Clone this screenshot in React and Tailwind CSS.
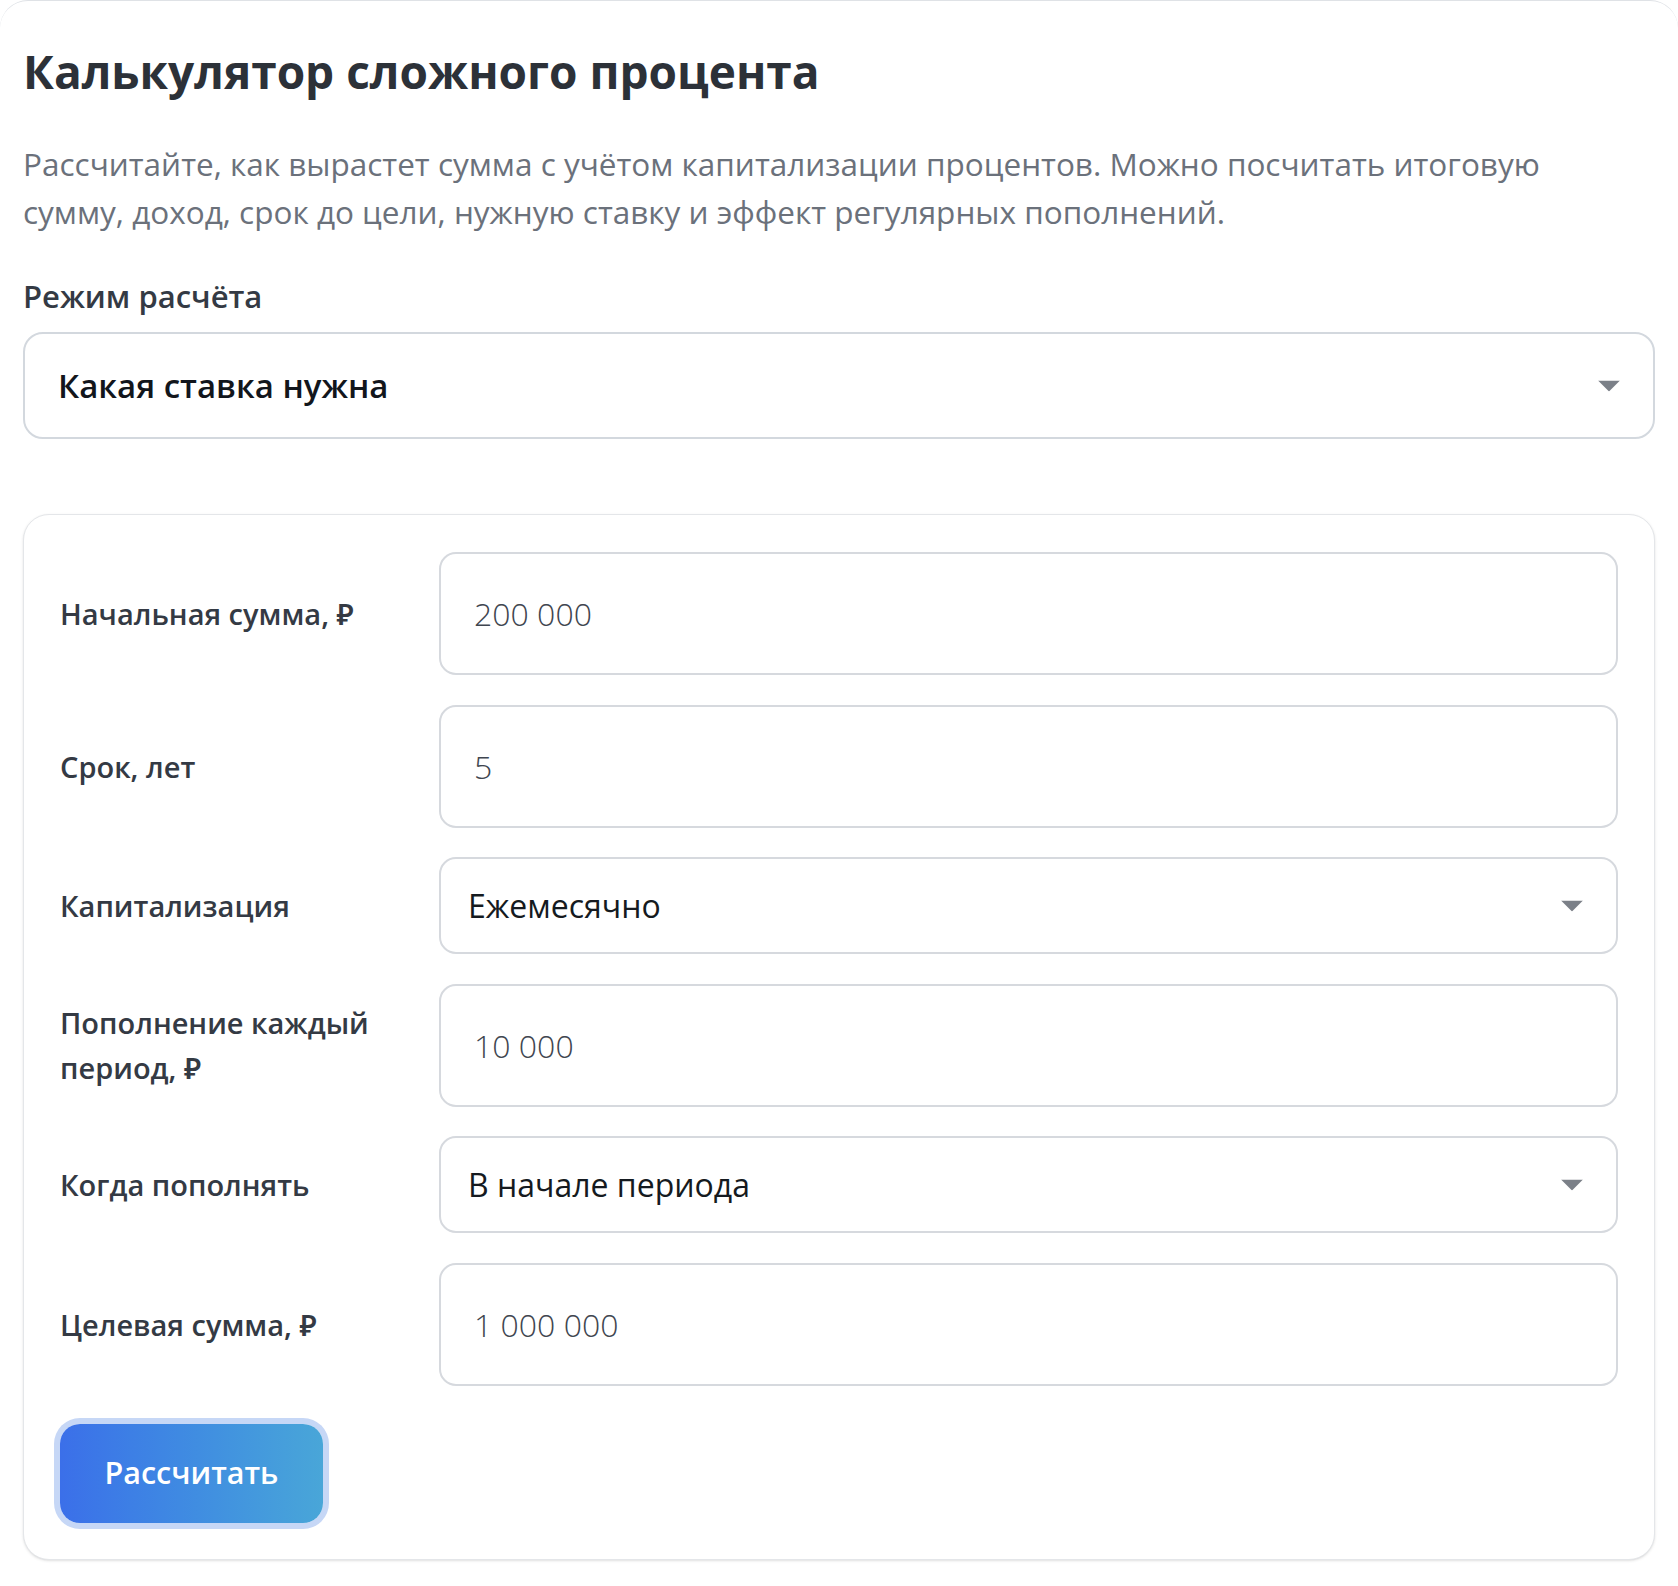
import React, { useState } from 'react';

const Arrow = () => (
  <svg
    className="pointer-events-none absolute right-[35px] top-1/2 -translate-y-1/2"
    width="22"
    height="11"
    viewBox="0 0 22 11"
  >
    <path d="M0 0 L22 0 L11 11 Z" fill="#7b8088" />
  </svg>
);

const Field = ({ label, children }) => (
  <div className="flex items-center">
    <label className="w-[355px] shrink-0 mr-[24px] text-[29px] leading-[45px] font-semibold text-[#343a44]">
      {label}
    </label>
    <div className="flex-1">{children}</div>
  </div>
);

const NumberInput = ({ value, onChange }) => (
  <input
    type="text"
    value={value}
    onChange={onChange}
    className="w-full h-[123px] px-[33px] border-2 border-[#d6d9de] rounded-[17px] bg-white text-[32px] font-light text-[#3f4650] outline-none"
  />
);

const SelectBox = ({ value, onChange, options }) => (
  <div className="relative">
    <select
      value={value}
      onChange={onChange}
      className="w-full h-[97px] pl-[27px] pr-[80px] border-2 border-[#d6d9de] rounded-[17px] bg-white text-[32px] text-[#151a20] appearance-none outline-none"
    >
      {options.map((o) => (
        <option key={o} value={o}>
          {o}
        </option>
      ))}
    </select>
    <Arrow />
  </div>
);

const App = () => {
  const [form, setForm] = useState({
    mode: 'Какая ставка нужна',
    start: '200 000',
    years: '5',
    cap: 'Ежемесячно',
    topup: '10 000',
    when: 'В начале периода',
    target: '1 000 000',
  });

  const handleChange = (field) => (e) => {
    setForm((prev) => ({ ...prev, [field]: e.target.value }));
  };

  return (
    <div className="min-h-screen bg-white font-['Open_Sans','Noto_Sans',sans-serif]">
      <div className="border-t border-[#dfe2e6] rounded-t-[28px] px-[23px] pt-[42px] pb-[26px]">
        <h1 className="text-[46px] leading-[56px] font-bold text-[#2c3138]">
          Калькулятор сложного процента
        </h1>

        <p className="mt-[41px] max-w-[1580px] text-[31.5px] leading-[48px] text-[#6b717b]">
          Рассчитайте, как вырастет сумма с учётом капитализации процентов. Можно
          посчитать итоговую сумму, доход, срок до цели, нужную ставку и эффект
          регулярных пополнений.
        </p>

        <label className="block mt-[40px] text-[31px] leading-[40px] font-semibold text-[#343a44]">
          Режим расчёта
        </label>

        <div className="relative mt-[16px]">
          <select
            value={form.mode}
            onChange={handleChange('mode')}
            className="w-full h-[107px] pl-[33px] pr-[80px] border-2 border-[#d3d8de] rounded-[20px] bg-white text-[33px] font-semibold text-[#12161c] appearance-none outline-none"
          >
            <option>Итоговая сумма</option>
            <option>Доход</option>
            <option>Срок до цели</option>
            <option>Какая ставка нужна</option>
            <option>Эффект пополнений</option>
          </select>
          <Arrow />
        </div>

        <form
          onSubmit={(e) => e.preventDefault()}
          className="mt-[75px] border border-[#e4e6e9] rounded-[26px] bg-white shadow-sm px-[36px] pt-[37px] pb-[36px]"
        >
          <div className="flex flex-col gap-[29.5px]">
            <Field label="Начальная сумма, ₽">
              <NumberInput value={form.start} onChange={handleChange('start')} />
            </Field>
            <Field label="Срок, лет">
              <NumberInput value={form.years} onChange={handleChange('years')} />
            </Field>
            <Field label="Капитализация">
              <SelectBox
                value={form.cap}
                onChange={handleChange('cap')}
                options={['Ежегодно', 'Ежеквартально', 'Ежемесячно', 'Ежедневно']}
              />
            </Field>
            <Field label="Пополнение каждый период, ₽">
              <NumberInput value={form.topup} onChange={handleChange('topup')} />
            </Field>
            <Field label="Когда пополнять">
              <SelectBox
                value={form.when}
                onChange={handleChange('when')}
                options={['В начале периода', 'В конце периода']}
              />
            </Field>
            <Field label="Целевая сумма, ₽">
              <NumberInput value={form.target} onChange={handleChange('target')} />
            </Field>
          </div>

          <button
            type="submit"
            className="mt-[38px] w-[263px] h-[99px] rounded-[20px] bg-gradient-to-r from-[#3b6fe9] to-[#49a6d8] ring-[6px] ring-[#c6d7f6] text-white text-[30.5px] font-semibold"
          >
            Рассчитать
          </button>
        </form>
      </div>
    </div>
  );
};

export default App;
